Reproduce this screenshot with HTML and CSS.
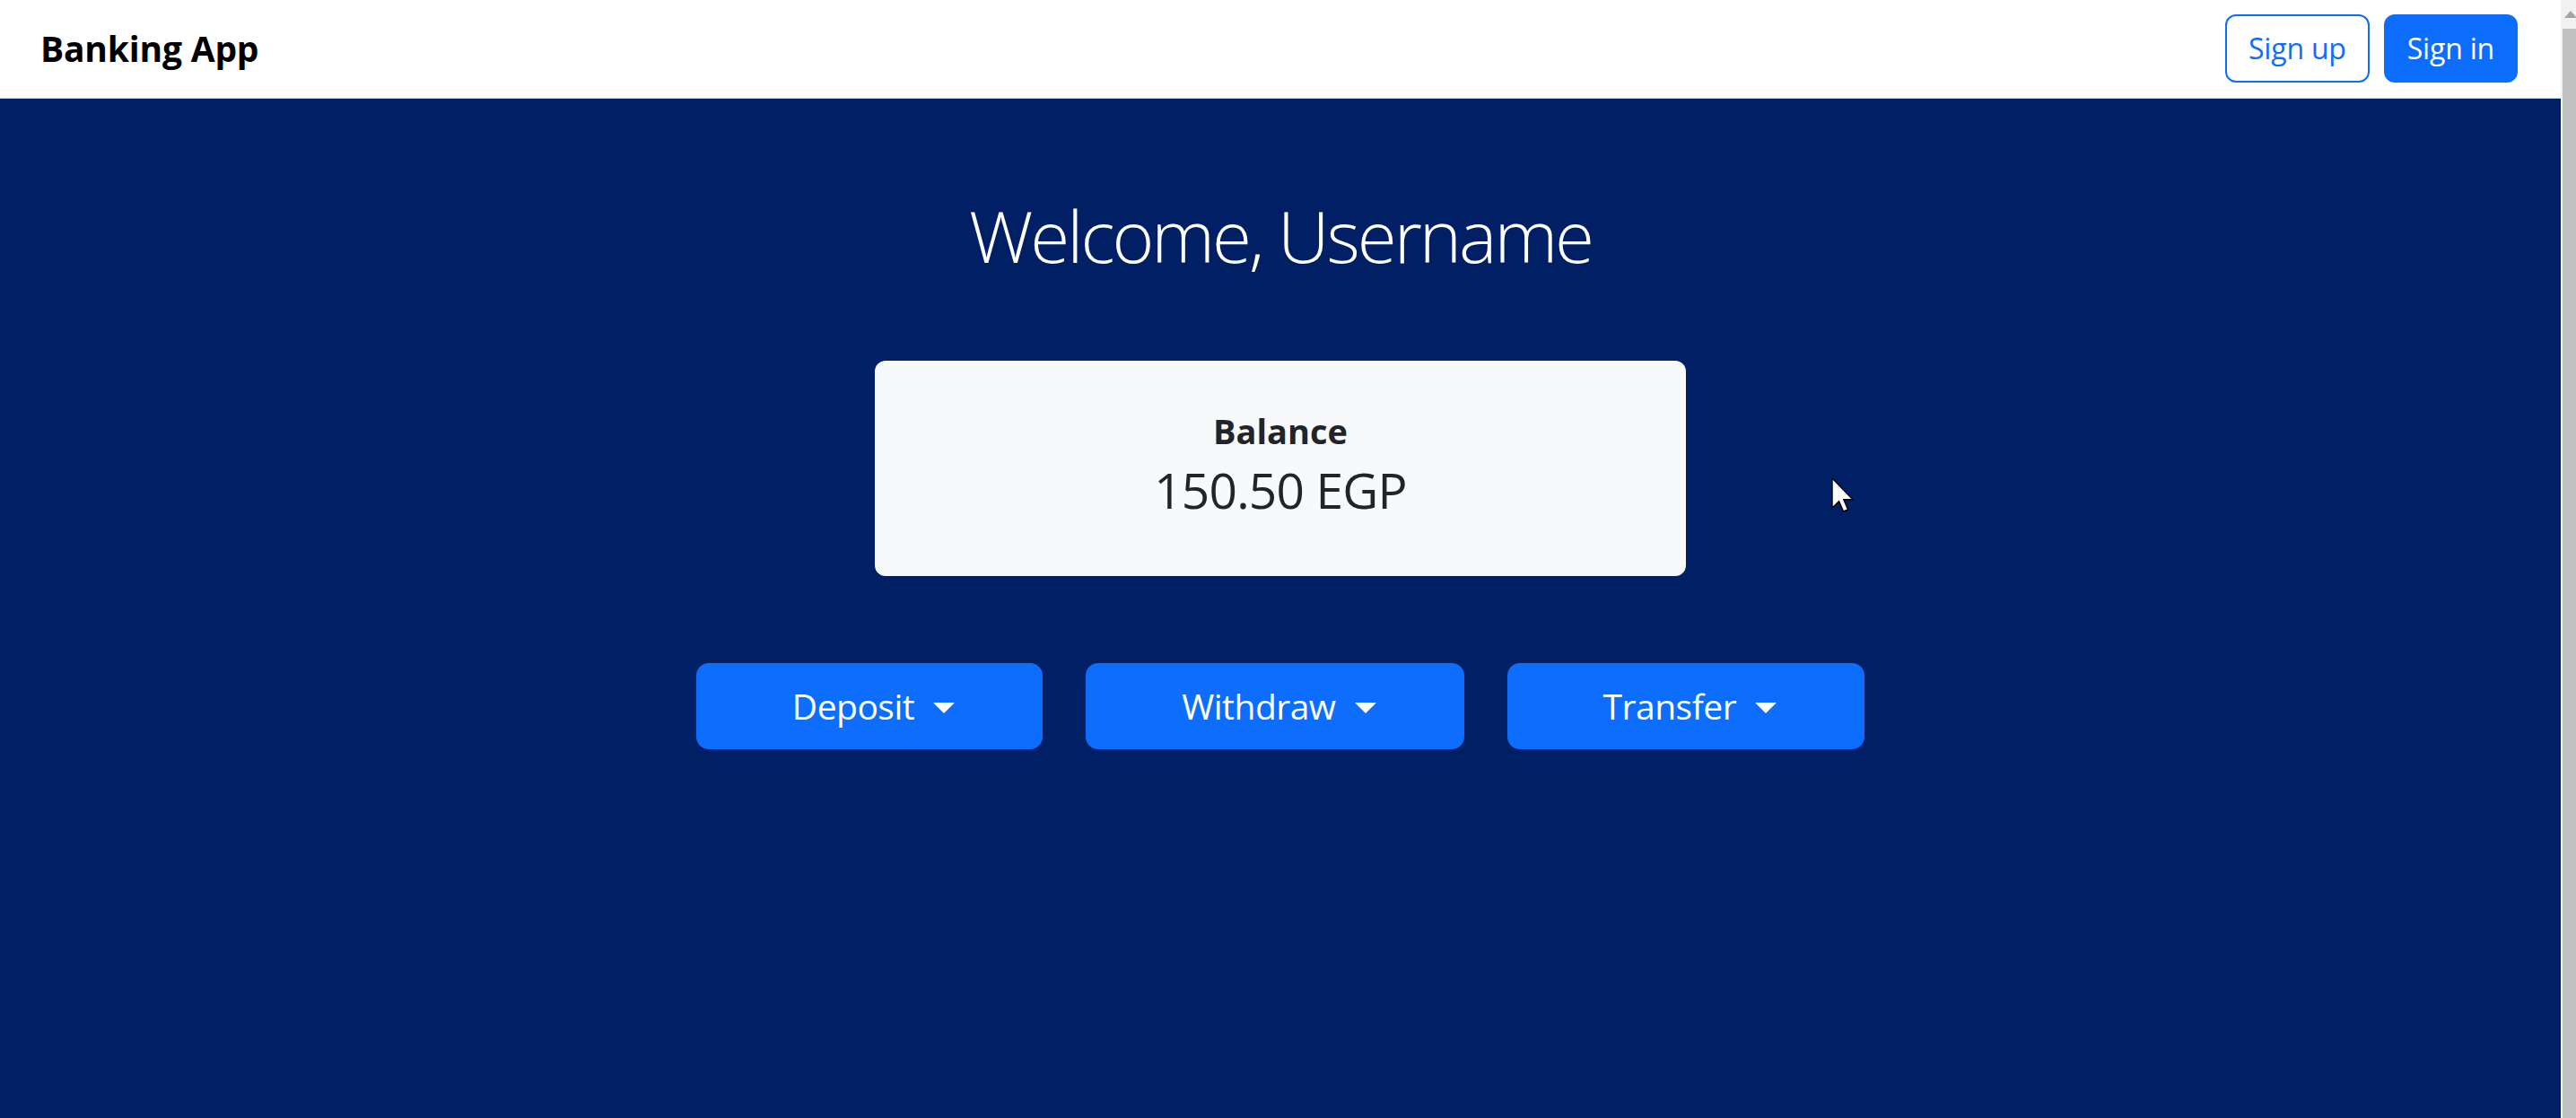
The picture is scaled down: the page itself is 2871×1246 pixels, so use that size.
FILE: index.html
```html
<!DOCTYPE html>
<html lang="en">
<head>
<meta charset="utf-8">
<title>Banking App</title>
<link rel="stylesheet" href="styles.css">
</head>
<body>
<div class="app">
  <div class="page">
    <nav class="navbar">
      <span class="brand">Banking App</span>
      <div class="auth">
        <button class="btn btn-outline">Sign up</button>
        <button class="btn btn-primary">Sign in</button>
      </div>
    </nav>
    <main class="main">
      <h1 class="welcome">Welcome, Username</h1>
      <section class="card">
        <h5 class="card-title">Balance</h5>
        <p class="amount">150.50 EGP</p>
      </section>
      <div class="actions">
        <button class="btn-lg">Deposit<span class="caret"></span></button>
        <button class="btn-lg">Withdraw<span class="caret"></span></button>
        <button class="btn-lg">Transfer<span class="caret"></span></button>
      </div>
      <svg class="cursor" width="26" height="40" viewBox="0 0 13 20">
        <path d="M0.5 0.5 L0.5 17 L4.3 13.3 L6.8 19 L9.3 18 L6.9 12.4 L12 12.4 Z" fill="#fff" stroke="#000" stroke-width="0.7" stroke-linejoin="miter"/>
      </svg>
    </main>
  </div>
  <div class="scrollbar">
    <div class="sb-arrow"><span class="sb-tri"></span></div>
    <div class="sb-thumb"></div>
  </div>
</div>
</body>
</html>
```
FILE: styles.css
```css
* { box-sizing: border-box; }
html, body { margin: 0; padding: 0; height: 100%; overflow: hidden; }
body { font-family: "Open Sans", "Noto Sans", sans-serif; color: #212529; }

.app { display: flex; height: 1246px; }
.page { flex: 1; display: flex; flex-direction: column; min-width: 0; }

.navbar {
  height: 110px;
  background: #fff;
  display: flex;
  align-items: center;
  justify-content: space-between;
  padding: 0 48px 2px 45px;
  border-bottom: 1px solid #c9d0e2;
}
.brand { font-size: 39px; font-weight: 700; color: #000; letter-spacing: -0.2px; }
.auth { display: flex; gap: 16px; }
.btn {
  font-family: inherit;
  font-size: 32px;
  line-height: 48px;
  padding: 12px 24px;
  border-radius: 12px;
  border: 2px solid #0d6efd;
  cursor: pointer;
  letter-spacing: -0.2px;
}
.btn-outline { background: #fff; color: #0d6efd; }
.btn-primary { background: #0d6efd; color: #fff; }

.main {
  position: relative;
  flex: 1;
  background: #001f65;
  display: flex;
  flex-direction: column;
  align-items: center;
}
.welcome {
  margin: 104px 0 0;
  font-size: 80px;
  line-height: 96px;
  font-weight: 300;
  color: #fff;
  letter-spacing: -3px;
}
.card {
  margin-top: 92px;
  width: 904px;
  height: 240px;
  background: #f8f9fa;
  border-radius: 12px;
  display: flex;
  flex-direction: column;
  align-items: center;
  padding: 54px 0 0;
}
.card-title {
  margin: 0 0 8px;
  font-size: 38px;
  line-height: 48px;
  font-weight: 700;
  color: #212529;
}
.amount {
  margin: 0;
  font-size: 55px;
  line-height: 67px;
  font-weight: 400;
  color: #212529;
  letter-spacing: -0.8px;
}
.actions {
  margin-top: 97px;
  display: flex;
  gap: 48px;
}
.btn-lg {
  font-family: inherit;
  font-size: 39px;
  line-height: 60px;
  padding: 16px 96px 16px 105px;
  border: 2px solid #0d6efd;
  border-radius: 14px;
  background: #0d6efd;
  color: #fff;
  display: flex;
  align-items: center;
  letter-spacing: -0.5px;
  cursor: pointer;
}
.caret {
  display: inline-block;
  margin-left: 21px;
  margin-top: 4px;
  width: 0;
  height: 0;
  border-top: 12px solid #fff;
  border-left: 12px solid transparent;
  border-right: 12px solid transparent;
}
.cursor { position: absolute; left: 2041px; top: 422px; }

.scrollbar {
  width: 17px;
  background: #f1f1f1;
  display: flex;
  flex-direction: column;
}
.sb-arrow { height: 32px; position: relative; }
.sb-tri {
  position: absolute;
  top: 12px;
  left: 4px;
  width: 0; height: 0;
  border-bottom: 8px solid #a3a3a3;
  border-left: 7px solid transparent;
  border-right: 7px solid transparent;
}
.sb-thumb { flex: 1; margin-left: 2px; background: #c1c1c1; }
```
